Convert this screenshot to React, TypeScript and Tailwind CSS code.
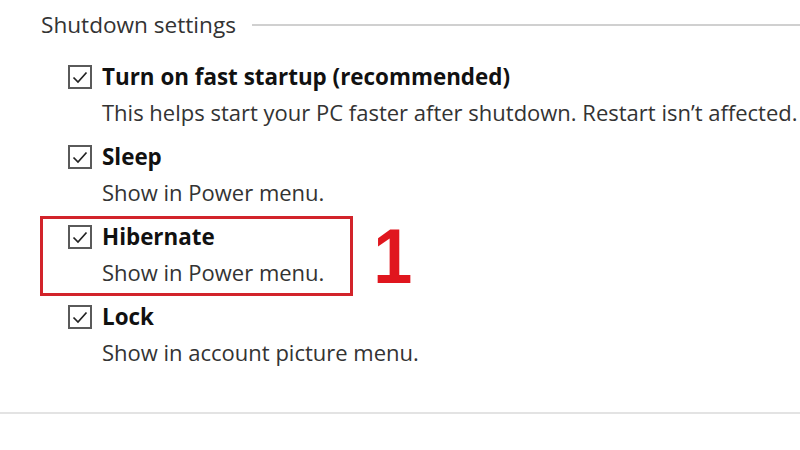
const items = [
  { title: 'Turn on fast startup (recommended)', desc: 'This helps start your PC faster after shutdown. Restart isn\u2019t affected.' },
  { title: 'Sleep', desc: 'Show in Power menu.' },
  { title: 'Hibernate', desc: 'Show in Power menu.', marked: true },
  { title: 'Lock', desc: 'Show in account picture menu.' },
];

const CheckBox = () => (
  <div className="w-[24px] h-[24px] shrink-0 border-2 border-[#5a5a5a] flex items-center justify-center bg-white">
    <svg width="18" height="18" viewBox="0 0 18 18">
      <path d="M2.5 9.5 L7 14 L15.5 4.5" fill="none" stroke="#222" strokeWidth="1.7" />
    </svg>
  </div>
);

const Item = ({ title, desc }: { title: string; desc: string }) => (
  <div className="flex flex-col">
    <div className="flex items-center gap-[10px] h-[24px]">
      <CheckBox />
      <span className="font-bold text-[#111] leading-none text-[22.4px]">{title}</span>
    </div>
    <div className="pl-[34px] mt-[12px] leading-none text-[#333] whitespace-nowrap">{desc}</div>
  </div>
);

export default function App() {
  return (
    <div className="w-[800px] h-[450px] bg-white overflow-hidden text-[22px]" style={{ fontFamily: '"Open Sans", "Noto Sans", sans-serif' }}>
      <div className="flex items-center pl-[41px] pt-[13px] h-[24px] box-content">
        <span className="text-[#333] leading-none text-[22.6px]">Shutdown settings</span>
        <div className="flex-1 ml-[16px] h-[2px] bg-[#d0d0d0]" />
      </div>
      <div className="pl-[68px] pt-[28px] flex flex-col gap-[22px]">
        {items.map(it =>
          it.marked ? (
            <div key={it.title} className="relative">
              <Item title={it.title} desc={it.desc} />
              <div className="absolute left-[-28px] top-[-9px] w-[313px] h-[80px] border-[3px] border-[#d2232a]" />
              <span className="absolute left-[303px] top-[-8px] text-[#e0161e] font-bold text-[78px] leading-none scale-x-90" style={{ fontFamily: '"Liberation Sans", Arial, sans-serif' }}>1</span>
            </div>
          ) : (
            <Item key={it.title} title={it.title} desc={it.desc} />
          )
        )}
      </div>
      <div className="mt-[49px] h-[2px] bg-[#e3e3e3]" />
    </div>
  );
}
